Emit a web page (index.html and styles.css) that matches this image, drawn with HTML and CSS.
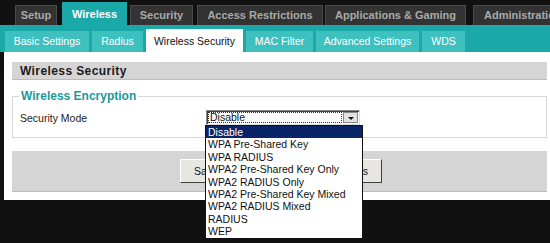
FILE: index.html
```html
<!DOCTYPE html>
<html lang="en">
<head>
    <meta charset="UTF-8">
    <title>Wireless Security</title>
    <link rel="stylesheet" href="styles.css">
</head>
<body>
    <div class="top-nav">
        <div class="top-tab tab-setup">Setup</div>
        <div class="top-tab tab-wireless active">Wireless</div>
        <div class="top-tab tab-security">Security</div>
        <div class="top-tab tab-access">Access Restrictions</div>
        <div class="top-tab tab-apps">Applications &amp; Gaming</div>
        <div class="top-tab tab-admin">Administration</div>
    </div>

    <div class="sub-nav">
        <div class="sub-tab w-basic">Basic Settings</div>
        <div class="sub-tab w-radius">Radius</div>
        <div class="sub-tab w-security active">Wireless Security</div>
        <div class="sub-tab w-mac">MAC Filter</div>
        <div class="sub-tab w-adv">Advanced Settings</div>
        <div class="sub-tab w-wds">WDS</div>
    </div>

    <div class="content">
        <div class="section-title">Wireless Security</div>

        <fieldset class="encryption">
            <legend>Wireless Encryption</legend>
            <div class="form-row">
                <span class="form-label">Security Mode</span>
                <div class="select-box">
                    <span class="select-value">Disable</span>
                    <span class="select-arrow"></span>
                    <ul class="select-list">
                        <li class="selected">Disable</li>
                        <li>WPA Pre-Shared Key</li>
                        <li>WPA RADIUS</li>
                        <li>WPA2 Pre-Shared Key Only</li>
                        <li>WPA2 RADIUS Only</li>
                        <li>WPA2 Pre-Shared Key Mixed</li>
                        <li>WPA2 RADIUS Mixed</li>
                        <li>RADIUS</li>
                        <li>WEP</li>
                    </ul>
                </div>
            </div>
        </fieldset>

        <div class="button-bar">
            <button class="btn btn-save">Save Settings</button>
            <button class="btn btn-cancel">Cancel Changes</button>
        </div>
    </div>
</body>
</html>
```

FILE: styles.css
```css
* {
    margin: 0;
    padding: 0;
    box-sizing: border-box;
}

body {
    background-color: #111;
    font-family: 'Liberation Sans', Arial, sans-serif;
    font-size: 10px;
    width: 550px;
    height: 243px;
    overflow: hidden;
}

/* top level tabs */
.top-nav {
    display: flex;
    align-items: flex-end;
    height: 25px;
    padding-left: 15px;
    background-color: #111;
    overflow: hidden;
}

.top-tab {
    flex-shrink: 0;
    height: 20px;
    line-height: 19px;
    text-align: center;
    font-weight: bold;
    font-size: 11px;
    color: #a9a9a9;
    background-color: #333;
    border: 1px solid #4a4a4a;
    border-bottom: none;
    white-space: nowrap;
    overflow: hidden;
}

.top-tab.active {
    height: 23px;
    line-height: 22px;
    color: #fff;
    background-color: #1aa9a8;
    border-color: #1aa9a8;
}

.tab-setup { width: 42px; }
.tab-wireless { width: 65px; margin-left: 5px; }
.tab-security { width: 63px; margin-left: 3px; }
.tab-access { width: 126px; margin-left: 4px; }
.tab-apps { width: 141px; margin-left: 2px; }
.tab-admin { width: 110px; margin-left: 7px; text-align: left; padding-left: 10px; }

/* second level tabs */
.sub-nav {
    display: flex;
    align-items: flex-end;
    height: 27px;
    padding-left: 5px;
    gap: 3px;
    background-color: #1aa9a8;
}

.sub-tab {
    height: 21px;
    line-height: 21px;
    text-align: center;
    color: #fff;
    background-color: #3ec0bf;
    white-space: nowrap;
    font-size: 10.5px;
}

.sub-tab.active {
    height: 23px;
    line-height: 24px;
    color: #111;
    background-color: #fff;
}

.w-basic { width: 84px; }
.w-radius { width: 51px; }
.w-security { width: 97px; }
.w-mac { width: 67px; }
.w-adv { width: 103px; }
.w-wds { width: 43px; }

/* content */
.content {
    margin-left: 4px;
    height: 148px;
    background-color: #fff;
    padding: 10px 3px 0 8px;
}

.section-title {
    height: 18px;
    line-height: 18px;
    background-color: #d5d5d5;
    border-bottom: 1px solid #bbb;
    padding-left: 8px;
    font-size: 12px;
    font-weight: bold;
    letter-spacing: 0.4px;
    color: #1c1c1c;
}

.encryption {
    margin-top: 9px;
    height: 49px;
    border: 1px solid #d8d8d8;
    padding: 0 0 0 7px;
}

.encryption legend {
    padding: 0 2px;
    margin-left: -1px;
    font-size: 12px;
    font-weight: bold;
    color: #1a9a9a;
}

.form-row {
    display: flex;
    align-items: center;
    margin-top: 7px;
}

.form-label {
    width: 186px;
    color: #222;
    font-size: 10.5px;
}

.select-box {
    position: relative;
    display: flex;
    width: 154px;
    height: 15px;
    border: 1px solid #8a8a8a;
    border-right-color: #ddd;
    border-bottom-color: #ddd;
    padding: 1px;
    box-shadow: inset 1px 1px 0 #404040;
}

.select-value {
    flex: 1;
    line-height: 11px;
    padding-left: 2px;
    outline: 1px dotted #333;
    outline-offset: -1px;
    color: #111;
    font-size: 10.5px;
}

.select-arrow {
    width: 15px;
    margin-left: 1px;
    background-color: #e3e3e3;
    border: 1px solid #888;
    position: relative;
}

.select-arrow::after {
    content: "";
    position: absolute;
    left: 4px;
    top: 4px;
    border-left: 3px solid transparent;
    border-right: 3px solid transparent;
    border-top: 3px solid #111;
}

/* open drop down list */
.select-list {
    position: absolute;
    top: 14px;
    left: -2px;
    width: 158px;
    list-style: none;
    background-color: #fff;
    border: 1px solid #111;
    z-index: 5;
}

.select-list li {
    height: 12.4px;
    line-height: 12.4px;
    padding-left: 2px;
    color: #111;
    white-space: nowrap;
    font-size: 10.5px;
}

.select-list li.selected {
    background-color: #0a2468;
    color: #fff;
}

.button-bar {
    display: flex;
    gap: 8px;
    margin-top: 13px;
    height: 41px;
    padding: 8px 0 0 168px;
    background-color: #d5d5d5;
    border-bottom: 1px solid #bbb;
}

.btn {
    height: 24px;
    width: 97px;
    font-family: 'Liberation Sans', Arial, sans-serif;
    font-size: 10.5px;
    color: #111;
    background-color: #e8e6e0;
    border: 1px solid #fff;
    border-right-color: #404040;
    border-bottom-color: #404040;
    text-align: left;
    padding-left: 13px;
}

.btn-cancel {
    text-align: right;
    padding: 0 13px 0 0;
}
```
